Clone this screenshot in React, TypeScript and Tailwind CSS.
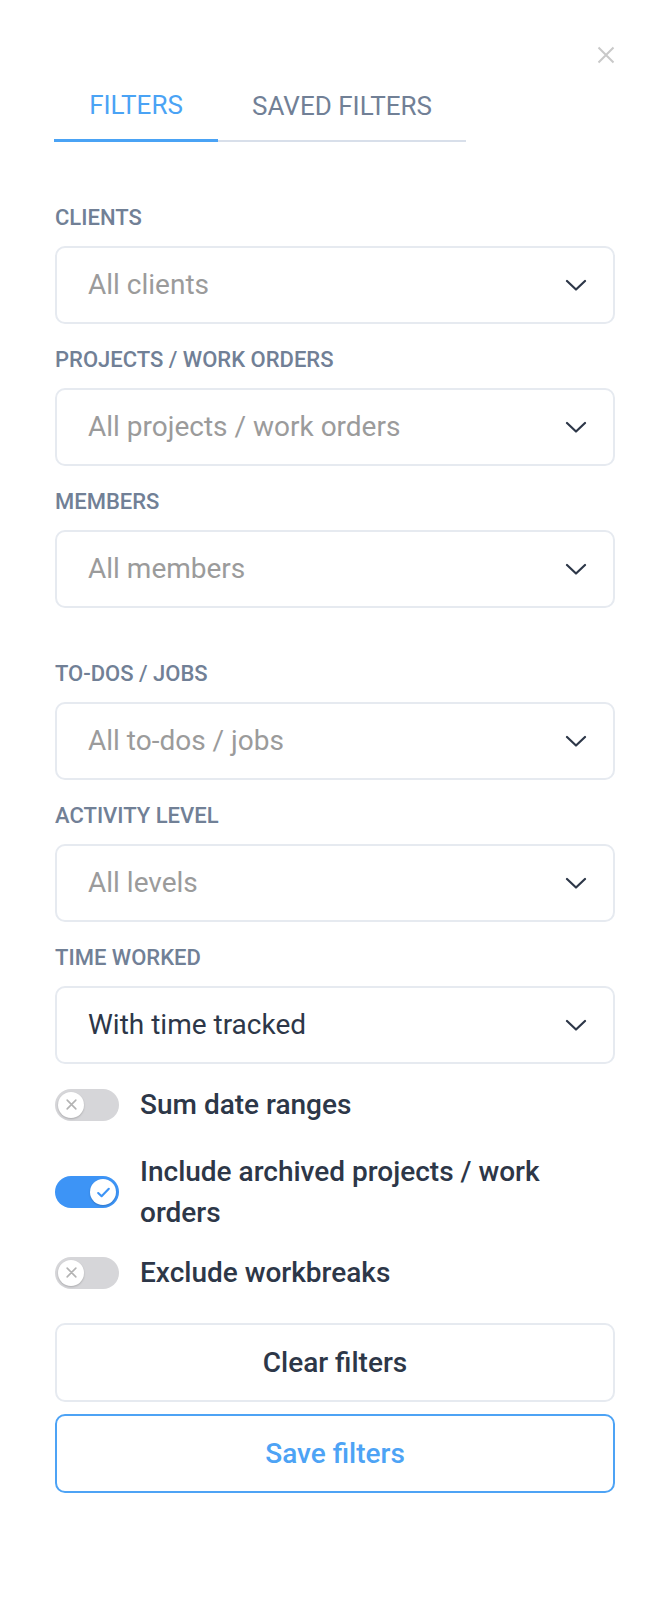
import { useState } from 'react';

const font = { fontFamily: 'Roboto, "Liberation Sans", Arial, sans-serif' };

type Campo = {
  label: string;
  valor: string;
  placeholder: boolean;
  extra?: boolean;
};

const campos: Campo[] = [
  { label: 'CLIENTS', valor: 'All clients', placeholder: true },
  { label: 'PROJECTS / WORK ORDERS', valor: 'All projects / work orders', placeholder: true },
  { label: 'MEMBERS', valor: 'All members', placeholder: true },
  { label: 'TO-DOS / JOBS', valor: 'All to-dos / jobs', placeholder: true, extra: true },
  { label: 'ACTIVITY LEVEL', valor: 'All levels', placeholder: true },
  { label: 'TIME WORKED', valor: 'With time tracked', placeholder: false },
];

function Chevron() {
  return (
    <svg width="22" height="12" viewBox="0 0 22 12" fill="none">
      <path d="M2 2l9 8.5L20 2" stroke="#2d3748" strokeWidth="2.2" strokeLinecap="round" strokeLinejoin="round" />
    </svg>
  );
}

function Toggle({ ativo, onClick }: { ativo: boolean; onClick: () => void }) {
  return (
    <button
      type="button"
      onClick={onClick}
      className={`relative shrink-0 w-[64px] h-[32px] rounded-full transition-colors ${ativo ? 'bg-[#3d94f6]' : 'bg-[#d6d6d9]'}`}
    >
      <span
        className={`absolute top-[3px] w-[26px] h-[26px] rounded-full bg-white shadow-[0_1px_2px_rgba(0,0,0,0.2)] flex items-center justify-center ${ativo ? 'left-[35px]' : 'left-[3px]'}`}
      >
        {ativo ? (
          <svg width="17" height="17" viewBox="0 0 16 16" fill="none">
            <path d="M3 8.5l3.2 3L13 4.5" stroke="#3d94f6" strokeWidth="2" strokeLinecap="round" strokeLinejoin="round" />
          </svg>
        ) : (
          <svg width="13" height="13" viewBox="0 0 12 12" fill="none">
            <path d="M2 2l8 8M10 2l-8 8" stroke="#b3b3b3" strokeWidth="1.5" strokeLinecap="round" />
          </svg>
        )}
      </span>
    </button>
  );
}

export default function App() {
  const [aba, setAba] = useState<'filters' | 'saved'>('filters');
  const [somarDatas, setSomarDatas] = useState(false);
  const [arquivados, setArquivados] = useState(true);
  const [pausas, setPausas] = useState(false);

  const opcoes = [
    { texto: 'Sum date ranges', ativo: somarDatas, set: () => setSomarDatas(!somarDatas), mt: 'mt-[20px]' },
    { texto: 'Include archived projects / work orders', ativo: arquivados, set: () => setArquivados(!arquivados), mt: 'mt-[26px]' },
    { texto: 'Exclude workbreaks', ativo: pausas, set: () => setPausas(!pausas), mt: 'mt-[19px]' },
  ];

  return (
    <div style={font} className="min-h-screen w-full bg-white pl-[55px] pr-[54px] pt-[46px] pb-[100px]">
      {/* fechar */}
      <div className="flex justify-end h-[18px]">
        <svg width="18" height="18" viewBox="0 0 18 18" fill="none">
          <path d="M1.5 1.5l15 15M16.5 1.5l-15 15" stroke="#c9c9c9" strokeWidth="2" />
        </svg>
      </div>

      {/* abas */}
      <div className="flex items-end mt-[26px] -ml-px">
        <button
          onClick={() => setAba('filters')}
          className={`w-[164px] pb-[19px] text-[26px] leading-[30px] ${aba === 'filters' ? 'text-[#4aa3f5] border-b-[3px] border-[#4aa3f5]' : 'text-[#718096] border-b-2 border-[#d8dfea]'}`}
        >
          FILTERS
        </button>
        <button
          onClick={() => setAba('saved')}
          className={`w-[248px] pb-[19px] text-[26px] leading-[30px] ${aba === 'saved' ? 'text-[#4aa3f5] border-b-[3px] border-[#4aa3f5]' : 'text-[#718096] border-b-2 border-[#d8dfea]'}`}
        >
          SAVED FILTERS
        </button>
      </div>

      {/* campos */}
      <div className="mt-[62px] flex flex-col">
        {campos.map((c, i) => (
          <div key={c.label} className={i === 0 ? '' : c.extra ? 'mt-[52px]' : 'mt-[22px]'}>
            <div className="text-[22px] leading-[28px] font-medium text-[#718096] mb-[14px]">{c.label}</div>
            <div className="h-[78px] rounded-[10px] border-2 border-[#e6eaf0] flex items-center justify-between pl-[31px] pr-[26px]">
              <span className={`text-[28px] ${c.placeholder ? 'text-[#9b9b9b]' : 'text-[#2d3748]'}`}>{c.valor}</span>
              <Chevron />
            </div>
          </div>
        ))}
      </div>

      {/* opções */}
      <div className="flex flex-col">
        {opcoes.map((o) => (
          <div key={o.texto} className={`flex items-center gap-[21px] ${o.mt}`}>
            <Toggle ativo={o.ativo} onClick={o.set} />
            <span className="text-[28px] leading-[41px] font-medium text-[#2d3748]">{o.texto}</span>
          </div>
        ))}
      </div>

      {/* botões */}
      <button className="mt-[30px] w-full h-[79px] rounded-[10px] border-2 border-[#e6eaf0] text-[28px] font-medium text-[#2d3748]">
        Clear filters
      </button>
      <button className="mt-[12px] w-full h-[79px] rounded-[10px] border-2 border-[#4da3f5] text-[28px] font-medium text-[#4da3f5]">
        Save filters
      </button>
    </div>
  );
}
